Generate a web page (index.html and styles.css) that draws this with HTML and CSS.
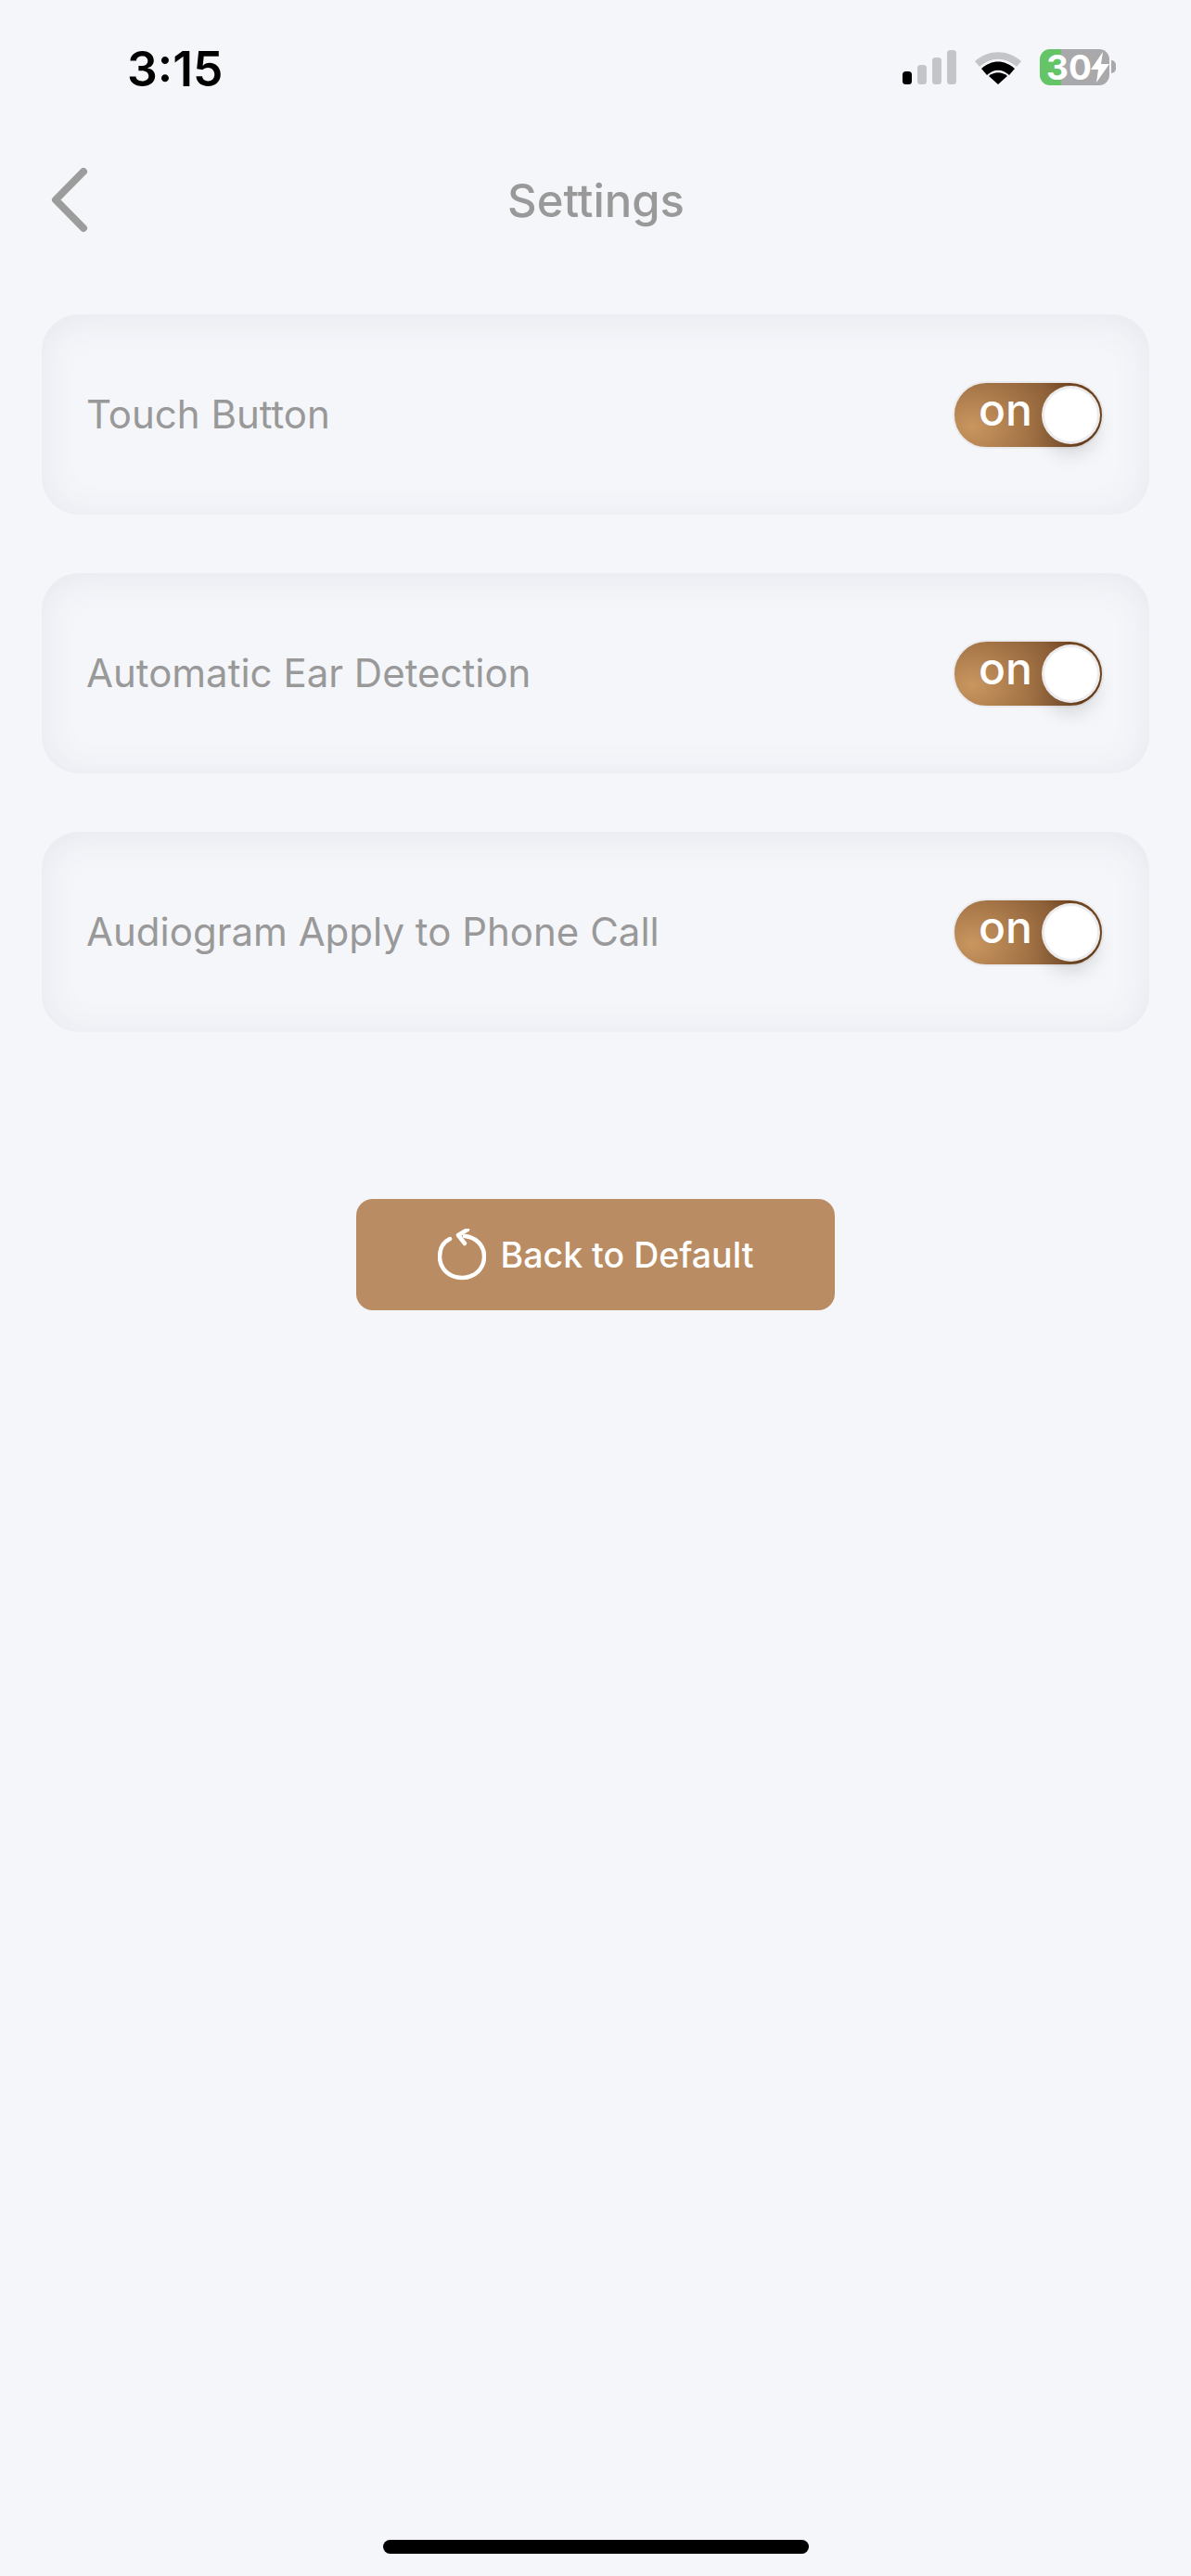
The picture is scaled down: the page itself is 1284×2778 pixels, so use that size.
FILE: index.html
```html
<!DOCTYPE html>
<html lang="en">
<head>
    <meta charset="UTF-8">
    <meta name="viewport" content="width=device-width, initial-scale=1.0">
    <title>Settings</title>
    <link rel="stylesheet" href="styles.css">
</head>
<body>
    <div class="page">
        <div class="status">
            <span class="time">3:15</span>
            <div class="status-icons">
                <svg class="signal" width="58" height="37" viewBox="0 0 58 37">
                    <rect x="0" y="23" width="10" height="14" rx="3.5" fill="#000"/>
                    <rect x="16" y="16" width="10" height="21" rx="3.5" fill="#c4c5c8"/>
                    <rect x="32" y="8" width="10" height="29" rx="3.5" fill="#c4c5c8"/>
                    <rect x="48" y="0" width="10" height="37" rx="3.5" fill="#c4c5c8"/>
                </svg>
                <svg class="wifi" width="52" height="38" viewBox="0 0 52 38">
                    <path d="M1 13 C16 0 36 0 51 13 L46 19 C33 8 19 8 6 19 Z" fill="#c4c5c8"/>
                    <path d="M8 21 C19 11 33 11 44 21 L38 28 C30 21 22 21 14 28 Z" fill="#000"/>
                    <path d="M16 29 C22 24 30 24 36 29 L26 38 Z" fill="#000"/>
                </svg>
                <div class="battery-wrap">
                    <div class="battery">
                        <span>30</span>
                        <svg width="20" height="33" viewBox="0 0 20 33">
                            <path d="M13 0 L0 19 H8 L6 33 L20 13 H11 Z" fill="#fff"/>
                        </svg>
                    </div>
                    <div class="battery-tip"></div>
                </div>
            </div>
        </div>

        <div class="header">
            <svg class="back" width="40" height="70" viewBox="0 0 40 70">
                <path d="M35 4 L5 34.500 L35 65" fill="none" stroke="#9c9c9c" stroke-width="8" stroke-linecap="round" stroke-linejoin="round"/>
            </svg>
            <div class="title">Settings</div>
            <div></div>
        </div>

        <div class="list">
            <div class="card">
                <span class="label">Touch Button</span>
                <div class="toggle"><span class="on">on</span><div class="knob"></div></div>
            </div>
            <div class="card">
                <span class="label">Automatic Ear Detection</span>
                <div class="toggle"><span class="on">on</span><div class="knob"></div></div>
            </div>
            <div class="card">
                <span class="label">Audiogram Apply to Phone Call</span>
                <div class="toggle"><span class="on">on</span><div class="knob"></div></div>
            </div>
        </div>

        <button type="button" class="btn-default">
            <svg width="52" height="56" viewBox="0 0 52 56">
                <path d="M13 11 C5 15 2 23 2 30 C2 43 12 53 26 53 C40 53 50 43 50 30 C50 18 41 9 29 8" fill="none" stroke="#fff" stroke-width="4.500" stroke-linecap="round"/>
                <path d="M32 1 L22 7 L29 16" fill="none" stroke="#fff" stroke-width="4.500" stroke-linecap="round" stroke-linejoin="round"/>
            </svg>
            <span>Back to Default</span>
        </button>

        <div class="home-bar"></div>
    </div>
</body>
</html>
```

FILE: styles.css
```css
body
{
    margin: 0;
    background-color: #f5f6fa;
    font-family: "Inter", "Liberation Sans", sans-serif;
}
div.page
{
    min-height: 2778px;
    display: flex;
    flex-direction: column;
    box-sizing: border-box;
}

/* status bar */
div.status
{
    height: 145px;
    display: flex;
    align-items: center;
    justify-content: space-between;
    padding: 0 81px 0 137px;
    box-sizing: border-box;
}
span.time
{
    font-size: 51.5px;
    font-weight: 600;
    color: #000;
    margin-top: 2px;
}
div.status-icons
{
    display: flex;
    align-items: center;
    margin-top: -1px;
}
svg.signal
{
    margin-right: 19px;
}
svg.wifi
{
    margin-right: 19px;
}
div.battery-wrap
{
    display: flex;
    align-items: center;
}
div.battery
{
    width: 75px;
    height: 39px;
    border-radius: 11px;
    background: linear-gradient(90deg, #64c466 31%, #a9a9ac 31%);
    display: flex;
    align-items: center;
    padding-left: 7px;
    box-sizing: border-box;
    color: #fff;
    font-size: 37px;
    font-weight: 700;
}
div.battery svg
{
    margin-left: -1px;
}
div.battery-tip
{
    width: 5px;
    height: 14px;
    margin-left: 2px;
    background-color: #a9a9ac;
    border-radius: 0 7px 7px 0;
}

/* header */
div.header
{
    height: 142px;
    display: grid;
    grid-template-columns: 1fr auto 1fr;
    align-items: center;
    padding-left: 55px;
    padding-right: 54px;
}
div.title
{
    font-size: 49px;
    font-weight: 500;
    color: #999;
}

/* rows */
div.list
{
    display: flex;
    flex-direction: column;
    gap: 63px;
    margin: 52px 45px 0 45px;
}
div.card
{
    height: 216px;
    border-radius: 40px;
    display: flex;
    align-items: center;
    justify-content: space-between;
    padding: 0 49px 0 48px;
    box-sizing: border-box;
    box-shadow: inset 0 4px 40px rgba(60, 60, 90, 0.08);
}
span.label
{
    font-size: 42px;
    color: #999;
    margin-top: -2px;
}
div.toggle
{
    width: 163px;
    height: 73px;
    border: 2px solid #ebebee;
    border-radius: 37px;
    box-sizing: border-box;
    background: radial-gradient(ellipse 120px 95px at 12% 68%, #c9965f, #8c5f37 80%, #70441f 100%);
    background-color: #70441f;
    display: flex;
    align-items: center;
    justify-content: space-between;
    padding: 0 2px 0 26px;
}
span.on
{
    font-size: 48px;
    font-weight: 500;
    line-height: 46px;
    color: #fff;
    margin-top: -10px;
}
div.knob
{
    width: 57px;
    height: 57px;
    margin-right: 3px;
    border-radius: 50%;
    background-color: #fff;
    box-shadow: 0 0 0 3px #ececee, 0 14px 20px rgba(0, 0, 0, 0.13);
}

/* button */
button.btn-default
{
    width: 516px;
    height: 120px;
    margin: 180px auto 0 auto;
    padding: 0;
    border: none;
    border-radius: 18px;
    background-color: #b98c63;
    color: #fff;
    font-family: inherit;
    font-size: 37.5px;
    font-weight: 500;
    display: flex;
    align-items: center;
    justify-content: center;
    gap: 16px;
}
div.home-bar
{
    width: 459px;
    height: 15px;
    margin: auto auto 24px auto;
    border-radius: 8px;
    background-color: #000;
}
```
